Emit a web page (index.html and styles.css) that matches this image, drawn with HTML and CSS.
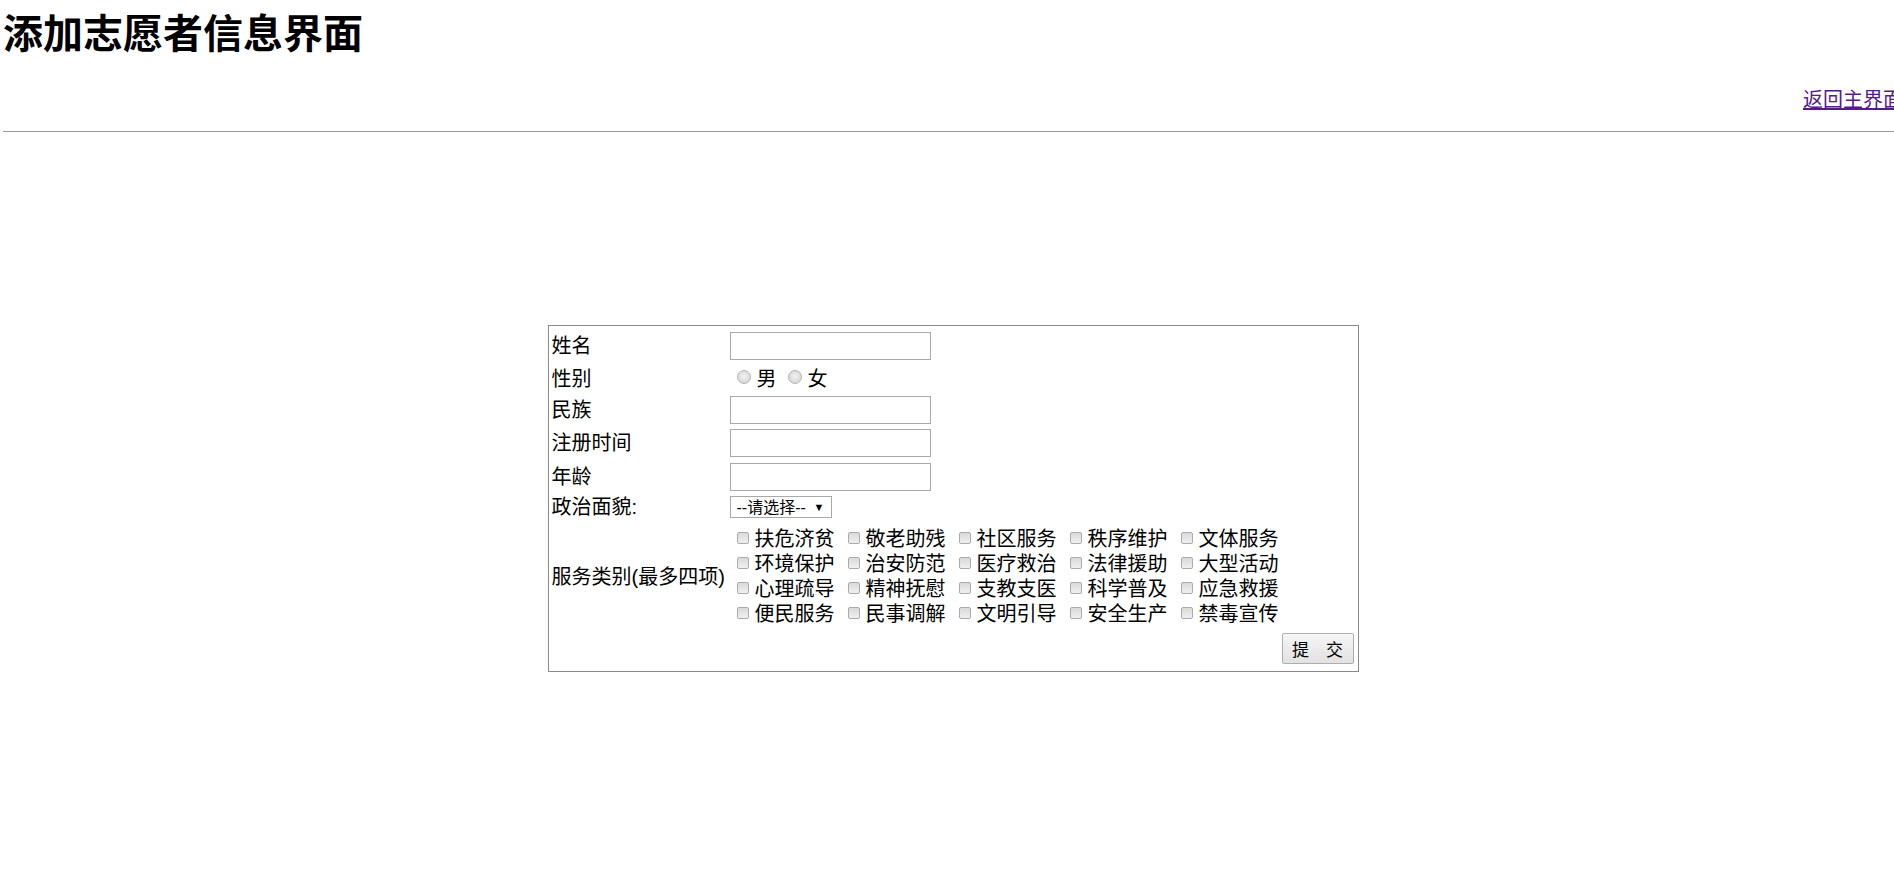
FILE: index.html
```html
<!DOCTYPE html>
<html lang="zh-CN">
<head>
<meta charset="utf-8">
<title>添加志愿者信息界面</title>
<link rel="stylesheet" href="styles.css">
</head>
<body>
<div class="page">
  <h1 class="title">添加志愿者信息界面</h1>
  <div class="topbar"><a href="#" class="back-link">返回主界面</a></div>
  <hr class="divider">
  <form class="form-box">
    <span class="label">姓名</span>
    <div class="field"><input class="text-input" type="text"></div>

    <span class="label">性别</span>
    <div class="field">
      <label class="radio-item"><input class="radio" type="radio" name="sex"><span>男</span></label>
      <label class="radio-item second"><input class="radio" type="radio" name="sex"><span>女</span></label>
    </div>

    <span class="label">民族</span>
    <div class="field"><input class="text-input" type="text"></div>

    <span class="label">注册时间</span>
    <div class="field"><input class="text-input" type="text"></div>

    <span class="label">年龄</span>
    <div class="field"><input class="text-input" type="text"></div>

    <span class="label">政治面貌:</span>
    <div class="field">
      <div class="select-box">
        <select class="select"><option>--请选择--</option></select>
        <span class="select-arrow">▼</span>
      </div>
    </div>

    <span class="label">服务类别(最多四项)</span>
    <div class="services">
      <label class="check-item"><input class="check" type="checkbox"><span>扶危济贫</span></label>
      <label class="check-item"><input class="check" type="checkbox"><span>敬老助残</span></label>
      <label class="check-item"><input class="check" type="checkbox"><span>社区服务</span></label>
      <label class="check-item"><input class="check" type="checkbox"><span>秩序维护</span></label>
      <label class="check-item"><input class="check" type="checkbox"><span>文体服务</span></label>
      <label class="check-item"><input class="check" type="checkbox"><span>环境保护</span></label>
      <label class="check-item"><input class="check" type="checkbox"><span>治安防范</span></label>
      <label class="check-item"><input class="check" type="checkbox"><span>医疗救治</span></label>
      <label class="check-item"><input class="check" type="checkbox"><span>法律援助</span></label>
      <label class="check-item"><input class="check" type="checkbox"><span>大型活动</span></label>
      <label class="check-item"><input class="check" type="checkbox"><span>心理疏导</span></label>
      <label class="check-item"><input class="check" type="checkbox"><span>精神抚慰</span></label>
      <label class="check-item"><input class="check" type="checkbox"><span>支教支医</span></label>
      <label class="check-item"><input class="check" type="checkbox"><span>科学普及</span></label>
      <label class="check-item"><input class="check" type="checkbox"><span>应急救援</span></label>
      <label class="check-item"><input class="check" type="checkbox"><span>便民服务</span></label>
      <label class="check-item"><input class="check" type="checkbox"><span>民事调解</span></label>
      <label class="check-item"><input class="check" type="checkbox"><span>文明引导</span></label>
      <label class="check-item"><input class="check" type="checkbox"><span>安全生产</span></label>
      <label class="check-item"><input class="check" type="checkbox"><span>禁毒宣传</span></label>
    </div>

    <div class="submit-row"><button class="submit" type="button">提　交</button></div>
  </form>
</div>
</body>
</html>
```
FILE: styles.css
```css
html, body {
  margin: 0;
  padding: 0;
  overflow: hidden;
  background: #fff;
}

body {
  font-family: "Liberation Sans", "Noto Sans CJK SC", sans-serif;
  color: #000;
  font-size: 20px;
}

.page {
  width: 1900px;
  margin-left: 3px;
}

.title {
  margin: 0;
  padding-top: 10px;
  font-size: 40px;
  line-height: 48px;
  font-weight: bold;
}

.topbar {
  margin-top: 30px;
  display: flex;
  justify-content: flex-end;
  line-height: 24px;
}

.back-link {
  color: #551a8b;
  text-decoration: underline;
  font-size: 20px;
}

.divider {
  margin: 19px 0 0;
  height: 0;
  border: 0;
  border-top: 1px solid #9a9a9a;
}

.form-box {
  box-sizing: border-box;
  width: 811px;
  margin: 193px auto 0;
  border: 1px solid #8a8a8a;
  padding: 2px;
  display: grid;
  grid-template-columns: 178px 1fr;
  grid-template-rows: 36px 29px 33px 34px 33px 28px 112px 36px;
}

.label {
  align-self: center;
  padding-left: 1px;
  line-height: 24px;
  white-space: nowrap;
}

.field {
  display: flex;
  align-items: center;
}

.text-input {
  box-sizing: border-box;
  width: 201px;
  height: 28px;
  margin: 0 0 0 1px;
  padding: 0 3px;
  border: 1px solid #a9a9a9;
  font-size: 17px;
  background: #fff;
}

.radio-item {
  display: flex;
  align-items: center;
  line-height: 24px;
}

.radio {
  -webkit-appearance: none;
  appearance: none;
  box-sizing: border-box;
  width: 14px;
  height: 14px;
  margin: 0 6px 3px 8px;
  border-radius: 50%;
  border: 1px solid #b4b4b4;
  background: radial-gradient(circle at 50% 45%, #f2f2f2 0%, #dedede 55%, #cfcfcf 100%);
}

.radio-item.second .radio {
  margin-left: 11px;
}

.select-box {
  box-sizing: border-box;
  display: flex;
  align-items: center;
  width: 102px;
  height: 22px;
  margin-left: 1px;
  border: 1px solid #a9a9a9;
  background: #fff;
}

.select {
  -webkit-appearance: none;
  appearance: none;
  flex: 1;
  min-width: 0;
  height: 20px;
  border: 0;
  padding: 0 0 0 6px;
  margin: 0;
  background: transparent;
  font-family: "Liberation Sans", "Noto Sans CJK SC", sans-serif;
  font-size: 16px;
  color: #000;
  outline: none;
}

.select-arrow {
  font-size: 11px;
  margin-right: 6px;
  line-height: 1;
}

.services {
  display: grid;
  grid-template-columns: repeat(5, 111px);
  grid-auto-rows: 25px;
  align-content: center;
}

.check-item {
  display: flex;
  align-items: center;
  line-height: 25px;
  white-space: nowrap;
}

.check {
  -webkit-appearance: none;
  appearance: none;
  box-sizing: border-box;
  width: 12px;
  height: 12px;
  margin: 0 6px 4px 8px;
  border: 1px solid #ababab;
  border-radius: 2px;
  background: linear-gradient(to bottom, #d9d9d9, #f0f0f0);
  flex: none;
}

.submit-row {
  grid-column: 1 / 3;
  display: flex;
  justify-content: flex-end;
  align-items: flex-start;
}

.submit {
  box-sizing: border-box;
  width: 72px;
  height: 31px;
  margin: 0 2px 0 0;
  padding: 0;
  border: 1px solid #adadad;
  border-radius: 2px;
  background: linear-gradient(to bottom, #f6f6f6, #e1e1e1);
  font-family: "Liberation Sans", "Noto Sans CJK SC", sans-serif;
  font-size: 17px;
  color: #000;
}
```
